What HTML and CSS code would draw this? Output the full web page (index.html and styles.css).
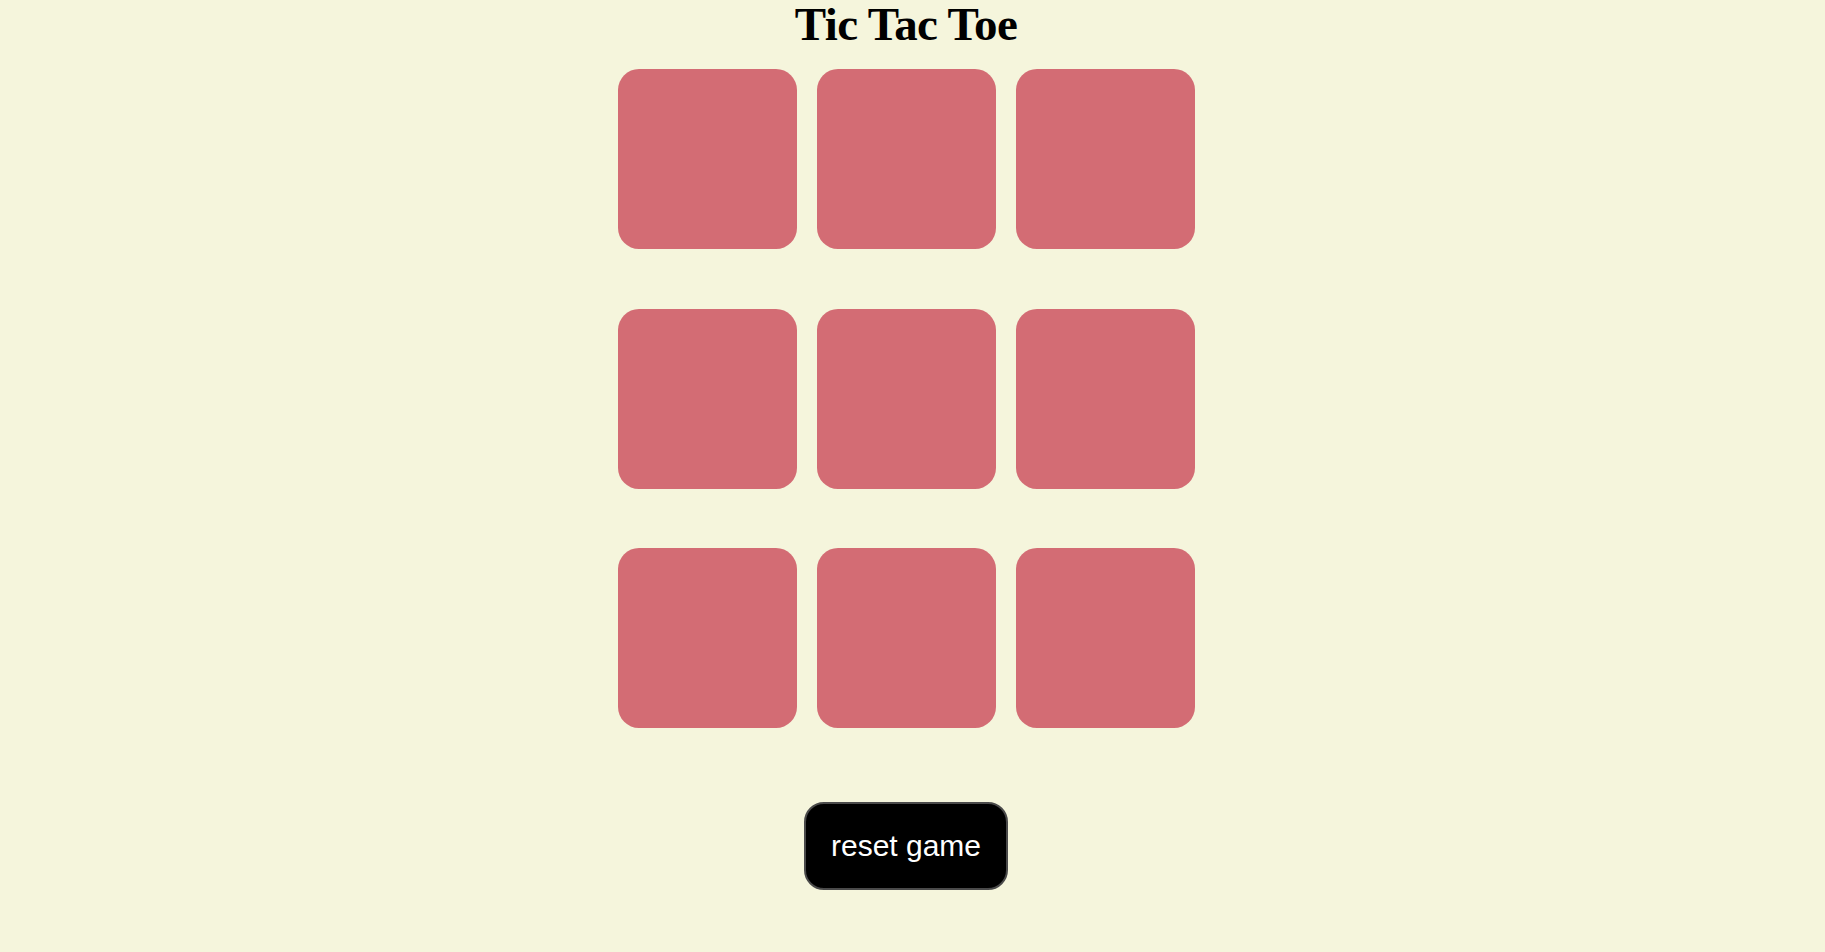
FILE: index.html
```html
<!DOCTYPE html>
<html lang="en">
<head>
<meta charset="UTF-8">
<title>Tic Tac Toe</title>
<link rel="stylesheet" href="styles.css">
</head>
<body>
<main class="page">
  <h1 class="title">Tic Tac Toe</h1>
  <div class="board">
    <button class="box"></button>
    <button class="box"></button>
    <button class="box"></button>
    <button class="box"></button>
    <button class="box"></button>
    <button class="box"></button>
    <button class="box"></button>
    <button class="box"></button>
    <button class="box"></button>
  </div>
  <button class="reset">reset game</button>
</main>
</body>
</html>
```
FILE: styles.css
```css
html, body {
  margin: 0;
  padding: 0;
}
body {
  background: #f5f5dc;
  height: 952px;
  overflow: hidden;
}
.page {
  display: flex;
  flex-direction: column;
  align-items: center;
  padding-right: 13px;
}
.title {
  margin: 0;
  font-family: "Liberation Serif", "Times New Roman", serif;
  font-weight: bold;
  font-size: 47px;
  line-height: 48px;
  letter-spacing: -0.6px;
  color: #000;
}
.board {
  margin-top: 21px;
  display: grid;
  grid-template-columns: repeat(3, 179px);
  grid-template-rows: repeat(3, 180px);
  column-gap: 20px;
  row-gap: 59.5px;
}
.box {
  border: none;
  padding: 0;
  margin: 0;
  background: #d36c74;
  border-radius: 21px;
}
.reset {
  margin-top: 74px;
  font-family: "Liberation Sans", Arial, sans-serif;
  font-size: 30px;
  line-height: 34px;
  padding: 25px 25px;
  color: #fff;
  background: #000;
  border: 2px solid #4a4a4a;
  border-radius: 20px;
}
```
